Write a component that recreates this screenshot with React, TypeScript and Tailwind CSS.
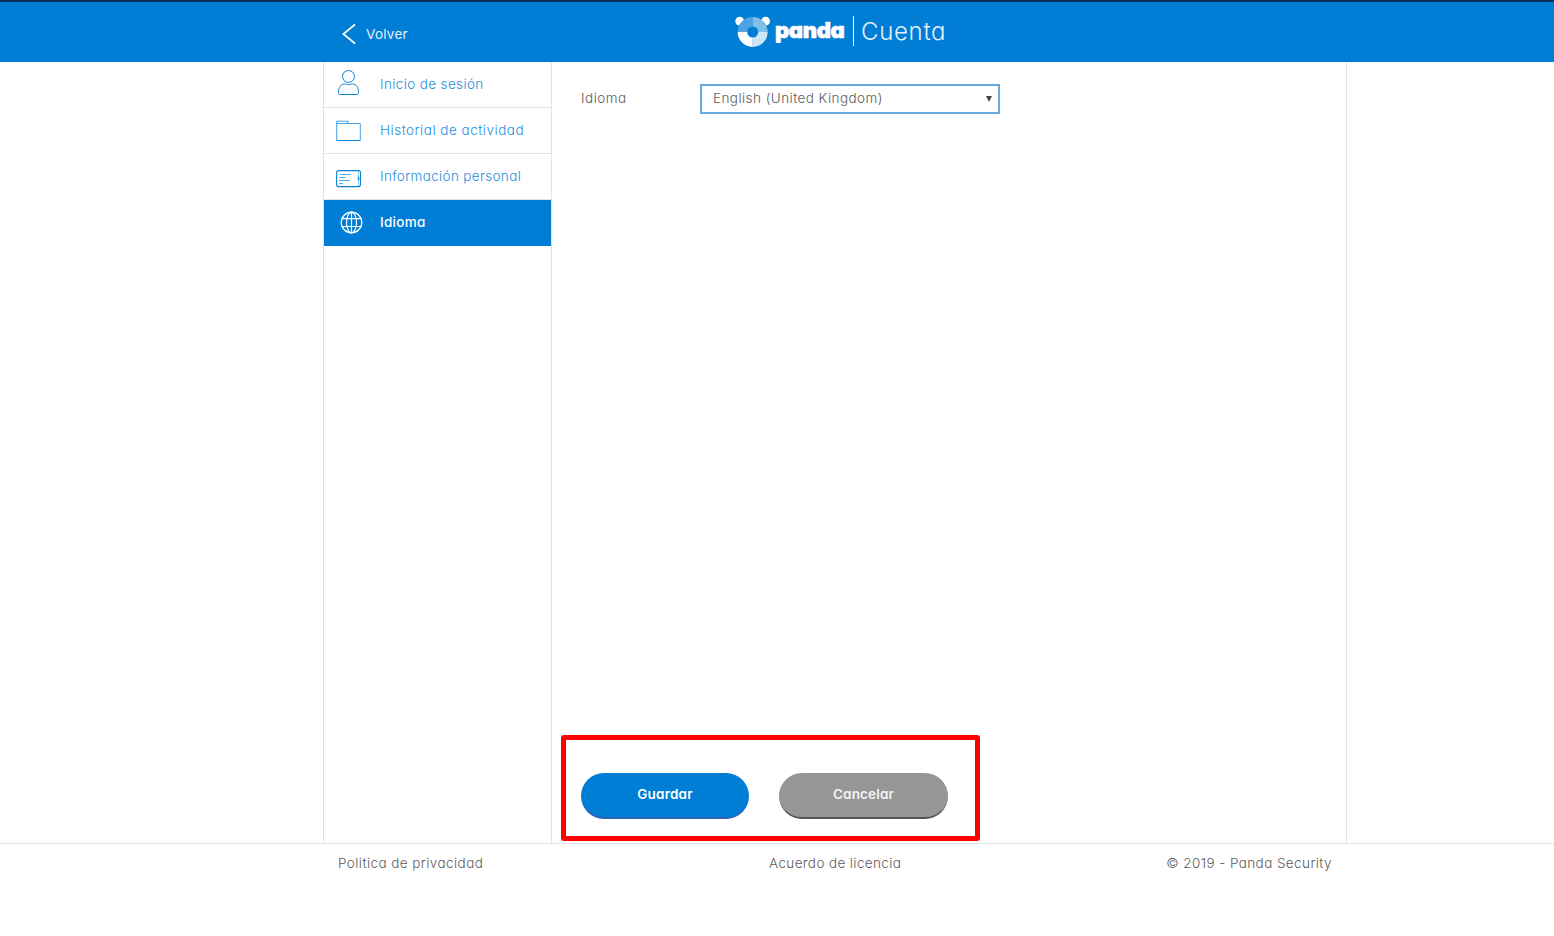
import type { ReactNode } from "react";

function UserIcon() {
  return (
    <svg width="26" height="28" viewBox="0 0 26 28" fill="none" stroke="#0a82d6" strokeWidth="1">
      <circle cx="13.500" cy="7.500" r="6" />
      <path d="M3.500 23.500c0-5.500 2.500-8.500 6.200-8.500 1.200 0 2 .6 3.800.6s2.600-.6 3.800-.6c3.700 0 6.200 3 6.200 8.500 0 1.300-.6 2-1.800 2H5.300c-1.200 0-1.800-.7-1.800-2z" />
    </svg>
  );
}

function FolderIcon() {
  return (
    <svg width="26" height="22" viewBox="0 0 26 22" fill="none" stroke="#0a82d6" strokeWidth="1">
      <path d="M.7 20V1.200h11.300v2.300h12.300V20" strokeOpacity="0.75" />
      <path d="M.7 3.500H12" strokeOpacity="0.75" />
      <path d="M.5 20.500h24" />
    </svg>
  );
}

function CardIcon() {
  return (
    <svg width="26" height="18" viewBox="0 0 26 18" fill="none" stroke="#0a82d6" strokeWidth="1.100">
      <rect x="0.600" y="0.600" width="23.900" height="16" rx="2" />
      <path d="M22.500 1v5M22.500 11v5.500" strokeOpacity="0.4" />
      <path d="M22.500 6.500v4" strokeWidth="1.500" />
      <path d="M4 4.500h11M3.500 7.500h6M3 10.500h11M3.500 13.500h3.500" strokeOpacity="0.7" />
    </svg>
  );
}

function GlobeIcon() {
  return (
    <svg width="23" height="23" viewBox="0 0 23 23" fill="none" stroke="white" strokeWidth="1.200">
      <circle cx="11.500" cy="11.500" r="10.300" />
      <ellipse cx="11.500" cy="11.500" rx="5" ry="10.300" />
      <path d="M11.500 1.200v20.600M1.800 7.700h19.400M1.800 15.500h19.400" />
    </svg>
  );
}

function PandaMark() {
  return (
    <svg width="36" height="32" viewBox="0 0 36 32">
      <circle cx="4.700" cy="5.200" r="4.400" fill="white" />
      <circle cx="30.600" cy="5.200" r="4.400" fill="white" />
      <circle cx="17.700" cy="16" r="14.800" fill="#007dd5" />
      <path d="M2.700 16a15 15 0 0 1 15-15v9.500a5.500 5.500 0 0 0-5.500 5.500z" fill="#4da4e2" />
      <path d="M17.700 1a15 15 0 0 1 15 15h-9.500a5.500 5.500 0 0 0-5.500-5.500z" fill="#80bfea" />
      <path d="M32.700 16a15 15 0 0 1-15 15v-9.500a5.500 5.500 0 0 0 5.500-5.500z" fill="#cce5f7" />
      <path d="M17.700 31a15 15 0 0 1-15-15h9.500a5.500 5.500 0 0 0 5.500 5.500z" fill="white" />
    </svg>
  );
}

function NavItem({ icon, label, pad, spacing, active }: { icon: ReactNode; label: string; pad: string; spacing: string; active?: boolean }) {
  return (
    <a
      className={
        active
          ? "flex h-[46px] bg-[#007dd5] text-white"
          : "flex h-[46px] border-b border-[#e3e3e3] text-[#1f8edb]"
      }
    >
      <span className={`w-14 shrink-0 ${pad}`}>{icon}</span>
      <span className={`whitespace-nowrap leading-[45px] ${spacing} ${active ? "font-medium" : "font-light"}`}>{label}</span>
    </a>
  );
}

export default function App() {
  return (
    <div className="flex h-[936px] w-full flex-col bg-white font-['Inter','Liberation_Sans',sans-serif] text-[13.5px] text-[#5c5c5c] [font-feature-settings:'cv11']">
      <header className="h-[62px] shrink-0 border-t-2 border-[#0b2f5b] bg-[#007dd5] text-white">
        <div className="ml-[323px] flex w-[1024px]">
          <a className="flex w-[412px] pl-[19px]">
            <svg className="mt-[21px]" width="15" height="22" viewBox="0 0 15 22" fill="none" stroke="white" strokeWidth="1.700">
              <path d="M13 1.500 1.300 11 13 20.500" />
            </svg>
            <span className="ml-[9px] mt-[22px] leading-5 tracking-[0.270px] text-[#e6f2fb]">Volver</span>
          </a>
          <div className="flex">
            <div className="mt-[14px]"><PandaMark /></div>
            <span className="ml-[4px] mt-[12px] w-[78px] text-[22px] leading-[32px] font-black tracking-[-0.350px] [-webkit-text-stroke:0.600px_white]">panda</span>
            <span className="mt-[14px] h-[30px] w-px bg-white" />
            <span className="ml-[7px] mt-[14px] text-[24px] leading-8 font-light tracking-[0.700px] text-[#e3f1fb]">Cuenta</span>
          </div>
        </div>
      </header>

      <div className="ml-[323px] flex h-[781px] w-[1024px] border-x border-[#e3e3e3]">
        <nav className="w-[228px] shrink-0 border-r border-[#e3e3e3]">
          <NavItem icon={<UserIcon />} label="Inicio de sesión" pad="pl-[11px] pt-[7px]" spacing="tracking-[0.370px]" />
          <NavItem icon={<FolderIcon />} label="Historial de actividad" pad="pl-3 pt-3" spacing="tracking-[0.510px]" />
          <NavItem icon={<CardIcon />} label="Información personal" pad="pl-3 pt-4" spacing="tracking-[0.350px]" />
          <NavItem icon={<GlobeIcon />} label="Idioma" pad="pl-4 pt-[11px]" spacing="tracking-[0.300px]" active />
        </nav>
        <main className="flex flex-1 flex-col justify-between">
          <div className="flex pt-[22px] pl-[29px]">
            <label className="w-[119px] leading-[28px] font-light tracking-[0.500px]">Idioma</label>
            <button className="flex h-[30px] w-[300px] items-center justify-between border-2 border-[#68a9de] pr-[5px] pl-[11px] font-light">
              <span className="-mt-[3px] leading-5 tracking-[0.440px]">English (United Kingdom)</span>
              <svg width="8" height="8" viewBox="0 0 8 8">
                <path d="M1 1h6L4 7z" fill="#444" />
              </svg>
            </button>
          </div>
          <div className="mb-[2px] ml-[9px] flex h-[106px] w-[419px] gap-[30px] rounded-[3px] border-[5px] border-[#ff0000] pt-[33px] pl-[15px] font-semibold text-white">
            <button className="h-[46px] w-[168px] rounded-[23px] border-b-2 border-[#2a62b8] bg-[#007dd5] pb-[3px] leading-5 tracking-[0.200px]">Guardar</button>
            <button className="h-[46px] w-[169px] rounded-[23px] border-b-2 border-[#555] bg-[#969696] pb-[3px] leading-5 tracking-[0.150px] text-[#f4f4f4]">Cancelar</button>
          </div>
        </main>
      </div>

      <footer className="border-t border-[#e3e3e3]">
        <div className="ml-[338px] flex w-[994px] justify-between pt-[8px] leading-[22px] font-light">
          <a className="w-[431px] tracking-[0.430px]">Politica de privacidad</a>
          <a className="flex-1 tracking-[0.380px]">Acuerdo de licencia</a>
          <span className="tracking-[0.410px]">© 2019 - Panda Security</span>
        </div>
      </footer>
    </div>
  );
}
